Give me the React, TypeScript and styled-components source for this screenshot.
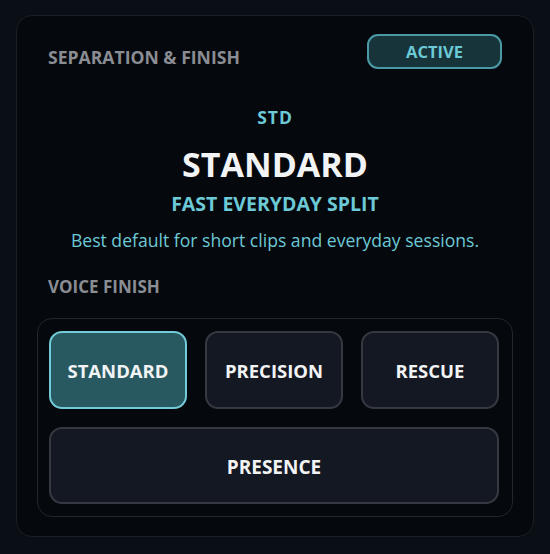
import React, { useState } from "react"
import styled, { createGlobalStyle } from "styled-components"

const Colors = {
  page: "#0a0e15",
  card: "#05080d",
  cardBorder: "#1b1f27",
  label: "#8a8d93",
  teal: "#6cc9d6",
  tealBorder: "#4a9aa5",
  tealBg: "#18343b",
  white: "#f2f3f5",
  buttonBg: "#141822",
  buttonBorder: "#363941",
  selectedBg: "#285960",
  selectedBorder: "#72cbd7",
  groupBorder: "#22262d",
}

const GlobalStyle = createGlobalStyle`
  html, body {
    margin: 0;
    padding: 0;
    background: ${Colors.page};
  }
  body {
    font-family: "Open Sans", "Noto Sans", sans-serif;
    -webkit-font-smoothing: antialiased;
  }
`

const Page = styled.div`
  width: 550px;
  height: 554px;
  padding: 15px 16px 0;
  box-sizing: border-box;
`

const Card = styled.section`
  box-sizing: border-box;
  padding: 18px 20px 19px;
  background: ${Colors.card};
  border: 1px solid ${Colors.cardBorder};
  border-radius: 16px;
  display: flex;
  flex-direction: column;
`

const Header = styled.header`
  display: flex;
  align-items: flex-start;
  justify-content: space-between;
  padding: 0 11px;
`

const SectionLabel = styled.h2<{ $offset?: number; $size?: number }>`
  margin: ${p => p.$offset ?? 0}px 0 0;
  font-size: ${p => p.$size ?? 17}px;
  line-height: 22px;
  font-weight: 700;
  color: ${Colors.label};
`

const Badge = styled.span`
  box-sizing: border-box;
  width: 135px;
  height: 35px;
  display: flex;
  align-items: center;
  justify-content: center;
  background: ${Colors.tealBg};
  border: 2px solid ${Colors.tealBorder};
  border-radius: 11px;
  color: ${Colors.teal};
  font-size: 16.5px;
  font-weight: 700;
`

const Hero = styled.div`
  display: flex;
  flex-direction: column;
  align-items: center;
  text-align: center;
  padding-top: 37px;
`

const Code = styled.div`
  font-size: 17.5px;
  line-height: 22px;
  font-weight: 700;
  letter-spacing: 1px;
  color: ${Colors.teal};
`

const Title = styled.h1`
  margin: 16px 0 0;
  font-size: 34px;
  line-height: 40px;
  font-weight: 700;
  color: ${Colors.white};
`

const Subtitle = styled.div`
  margin-top: 8px;
  font-size: 19.5px;
  line-height: 24px;
  font-weight: 700;
  color: ${Colors.teal};
`

const Description = styled.p`
  margin: 13px 0 0;
  font-size: 17.6px;
  line-height: 22px;
  color: ${Colors.teal};
`

const LabelRow = styled.div`
  padding: 25px 11px 0;
`

const Group = styled.div`
  margin-top: 20px;
  padding: 12px 13px 12px 11px;
  border: 1px solid ${Colors.groupBorder};
  border-radius: 15px;
  display: grid;
  grid-template-columns: repeat(3, 1fr);
  grid-template-rows: 78px 77px;
  gap: 18px;
`

const Option = styled.button<{ $selected?: boolean; $wide?: boolean }>`
  grid-column: ${p => (p.$wide ? "1 / -1" : "auto")};
  box-sizing: border-box;
  padding: ${p => (p.$wide ? "3px 0 0" : "1px 0 0")};
  border-radius: 13px;
  border: 2px solid ${p => (p.$selected ? Colors.selectedBorder : Colors.buttonBorder)};
  background: ${p => (p.$selected ? Colors.selectedBg : Colors.buttonBg)};
  color: ${Colors.white};
  font-family: inherit;
  font-size: ${p => (p.$wide ? 19 : 18.5)}px;
  font-weight: 700;
  cursor: pointer;
`

const options = ["STANDARD", "PRECISION", "RESCUE", "PRESENCE"]

export default function App() {
  const [selected, setSelected] = useState("STANDARD")
  return (
    <Page>
      <GlobalStyle />
      <Card>
        <Header>
          <SectionLabel $offset={12} $size={17.6}>
            SEPARATION &amp; FINISH
          </SectionLabel>
          <Badge>ACTIVE</Badge>
        </Header>
        <Hero>
          <Code>STD</Code>
          <Title>STANDARD</Title>
          <Subtitle>FAST EVERYDAY SPLIT</Subtitle>
          <Description>Best default for short clips and everyday sessions.</Description>
        </Hero>
        <LabelRow>
          <SectionLabel>VOICE FINISH</SectionLabel>
        </LabelRow>
        <Group>
          {options.map(o => (
            <Option
              key={o}
              $selected={selected === o}
              $wide={o === "PRESENCE"}
              onClick={() => setSelected(o)}
            >
              {o}
            </Option>
          ))}
        </Group>
      </Card>
    </Page>
  )
}
